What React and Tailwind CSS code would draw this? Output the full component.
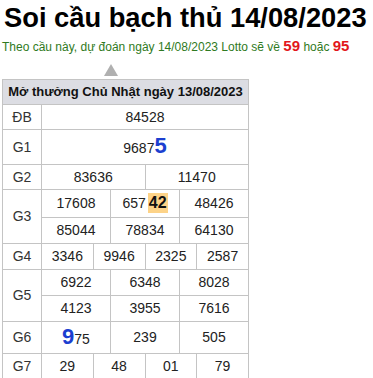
export default function App() {
  const td = "border border-[#c4c4c4] text-center text-[14px] text-[#222] p-0";
  const lb = "border border-[#c4c4c4] text-center text-[14px] text-[#333] p-0";
  return (
    <div className="w-[373px] h-[378px] overflow-hidden bg-white font-['Liberation_Sans',Arial,sans-serif]">
      <h1 className="pl-[4px] pt-[1px] text-[27.3px] leading-[34px] font-bold text-black whitespace-nowrap">Soi cầu bạch thủ 14/08/2023</h1>
      <p className="pl-[2px] mt-[3px] text-[12px] leading-[16px] text-[#2f7a22] whitespace-nowrap">
        Theo cầu này, dự đoán ngày 14/08/2023 Lotto sẽ về{" "}
        <b className="text-[15px] text-[#e2161b]">59</b> hoặc{" "}
        <b className="text-[15px] text-[#e2161b]">95</b>
      </p>
      <div className="ml-[104px] mt-[9px] w-0 h-0 border-l-[7px] border-r-[7px] border-b-[12px] border-l-transparent border-r-transparent border-b-[#b0b0b0]" />
      <table className="ml-[2px] mt-[3px] w-[247px] table-fixed border-collapse">
        <colgroup>
          <col className="w-[39px]" />
          {Array.from({ length: 12 }).map((_, i) => (
            <col key={i} />
          ))}
        </colgroup>
        <tbody>
          <tr className="h-[25px] bg-[#dcdde3]">
            <td colSpan={13} className="border border-[#c4c4c4] text-center text-[13px] font-bold text-[#111] p-0 whitespace-nowrap">
              Mở thưởng Chủ Nhật ngày 13/08/2023
            </td>
          </tr>
          <tr className="h-[25px]">
            <td className={lb}>ĐB</td>
            <td colSpan={12} className={td}>84528</td>
          </tr>
          <tr className="h-[35px]">
            <td className={lb}>G1</td>
            <td colSpan={12} className={td}>
              9687<b className="text-[22px] text-[#1c3fd0] leading-none">5</b>
            </td>
          </tr>
          <tr className="h-[25px]">
            <td className={lb}>G2</td>
            <td colSpan={6} className={td}>83636</td>
            <td colSpan={6} className={td}>11470</td>
          </tr>
          <tr className="h-[28px]">
            <td rowSpan={2} className={lb}>G3</td>
            <td colSpan={4} className={td}>17608</td>
            <td colSpan={4} className={td}>
              657<b className="inline-block ml-[2px] px-[1px] bg-[#fdd388] text-[16px] leading-[20px] text-[#111]">42</b>
            </td>
            <td colSpan={4} className={td}>48426</td>
          </tr>
          <tr className="h-[26px]">
            <td colSpan={4} className={td}>85044</td>
            <td colSpan={4} className={td}>78834</td>
            <td colSpan={4} className={td}>64130</td>
          </tr>
          <tr className="h-[26px]">
            <td className={lb}>G4</td>
            <td colSpan={3} className={td}>3346</td>
            <td colSpan={3} className={td}>9946</td>
            <td colSpan={3} className={td}>2325</td>
            <td colSpan={3} className={td}>2587</td>
          </tr>
          <tr className="h-[26px]">
            <td rowSpan={2} className={lb}>G5</td>
            <td colSpan={4} className={td}>6922</td>
            <td colSpan={4} className={td}>6348</td>
            <td colSpan={4} className={td}>8028</td>
          </tr>
          <tr className="h-[26px]">
            <td colSpan={4} className={td}>4123</td>
            <td colSpan={4} className={td}>3955</td>
            <td colSpan={4} className={td}>7616</td>
          </tr>
          <tr className="h-[32px]">
            <td className={lb}>G6</td>
            <td colSpan={4} className={td}>
              <b className="text-[22px] text-[#1c3fd0] leading-none">9</b>75
            </td>
            <td colSpan={4} className={td}>239</td>
            <td colSpan={4} className={td}>505</td>
          </tr>
          <tr className="h-[26px]">
            <td className={lb}>G7</td>
            <td colSpan={3} className={td}>29</td>
            <td colSpan={3} className={td}>48</td>
            <td colSpan={3} className={td}>01</td>
            <td colSpan={3} className={td}>79</td>
          </tr>
        </tbody>
      </table>
    </div>
  );
}
